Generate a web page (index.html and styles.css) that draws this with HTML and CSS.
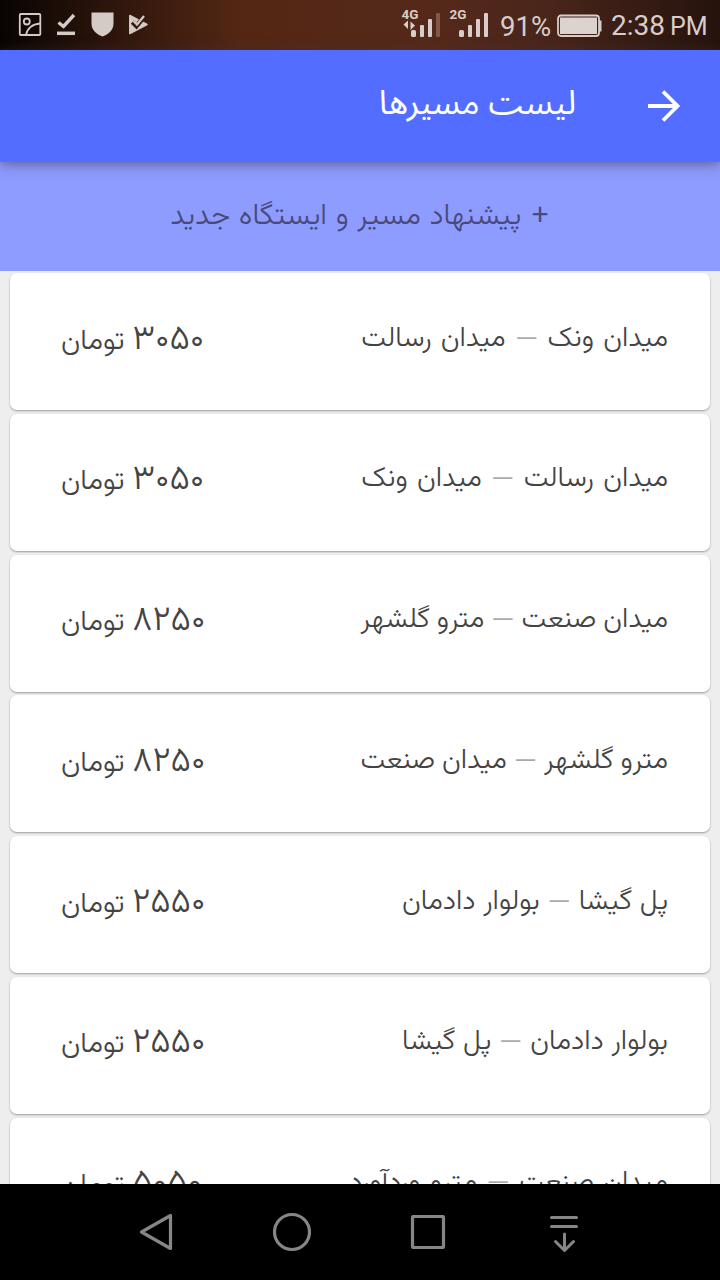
FILE: index.html
```html
<!DOCTYPE html>
<html lang="fa">
<head>
<meta charset="utf-8">
<title>لیست مسیرها</title>
<link rel="stylesheet" href="styles.css">
</head>
<body>
<div class="screen">
  <header class="status">
    <svg class="status-left" width="160" height="50" viewBox="0 0 160 50" fill="none" stroke="#d4cac6" stroke-width="1.800">
      <rect x="19.800" y="14" width="20.500" height="21" rx="1"/><circle cx="26.800" cy="21.500" r="3"/><path d="M26 35C27 29 32 24 40 23.500"/>
      <path d="M58.500 22.500l5 4 10.500-11.500" stroke-width="3.400"/><path d="M57 33.300h18" stroke-width="3.500"/>
      <path d="M91.500 12.500h22v11c0 6-4 10.500-11 13-7-2.500-11-7-11-13z" fill="#d4cac6" stroke="none"/>
      <path d="M129.800 15.500v18L147 24.500z" fill="#d4cac6" stroke-linejoin="round" stroke-width="1.500"/><path d="M132.500 22l4 4 9-11" stroke="#35190e" stroke-width="4.600"/><path d="M133.500 21l3.500 3.500 7-8.500" stroke-width="2.300"/>
    </svg>
    <div class="status-right">
      <svg width="98" height="50" viewBox="0 0 98 50" fill="#d8cdca">
        <text class="net" x="-.5" y="18.500">4G</text><text class="net" x="47.500" y="18.500">2G</text>
        <path d="M1.500 24.500l4.500-4v8.500zM13 25.500l-4.500-4v8.500z"/>
        <rect x="9" y="30" width="5" height="7" rx="1.500"/><rect x="18" y="25" width="4" height="12" rx="1"/><rect x="26" y="19" width="4" height="18" rx="1"/><rect x="34" y="13" width="4" height="24" rx="1" fill="#80594b"/>
        <rect x="57" y="30" width="5" height="7" rx="1.500"/><rect x="66" y="25" width="4" height="12" rx="1"/><rect x="74" y="19" width="4" height="18" rx="1"/><rect x="82" y="13" width="4" height="24" rx="1"/>
      </svg>
      <span class="pct">91%</span>
      <svg class="battery" width="46" height="24" viewBox="0 0 46 24"><rect x="1" y="1.500" width="41" height="20.500" rx="3" fill="none" stroke="#d8cdca" stroke-width="1.800"/><rect x="3" y="3.500" width="37" height="16.500" fill="#ddd3ce"/><path d="M42 6.500h2.500v11H42z" fill="#d8cdca"/></svg>
      <span class="clock">2:38 <small>PM</small></span>
    </div>
  </header>
  <div class="appbar" dir="rtl">
    <svg class="arrow" width="34" height="34" viewBox="0 0 34 34" fill="none" stroke="#fff" stroke-width="3.800"><path d="M1 17h30M16 2.500L30.500 17 16 31.500"/></svg>
    <h1>لیست مسیرها</h1>
  </div>
  <div class="suggest" dir="rtl"><span><b>+</b> پیشنهاد مسیر و ایستگاه جدید</span></div>
  <main class="list" dir="rtl">
    <div class="card"><span class="route wide">میدان ونک <i>—</i> میدان رسالت</span><span class="price"><b>۳۰۵۰</b> تومان</span></div>
    <div class="card"><span class="route wide">میدان رسالت <i>—</i> میدان ونک</span><span class="price"><b>۳۰۵۰</b> تومان</span></div>
    <div class="card"><span class="route tight">میدان صنعت <i>—</i> مترو گلشهر</span><span class="price"><b>۸۲۵۰</b> تومان</span></div>
    <div class="card"><span class="route tight">مترو گلشهر <i>—</i> میدان صنعت</span><span class="price"><b>۸۲۵۰</b> تومان</span></div>
    <div class="card"><span class="route">پل گیشا <i>—</i> بولوار دادمان</span><span class="price"><b>۲۵۵۰</b> تومان</span></div>
    <div class="card"><span class="route">بولوار دادمان <i>—</i> پل گیشا</span><span class="price"><b>۲۵۵۰</b> تومان</span></div>
    <div class="card"><span class="route wide">میدان صنعت <i>—</i> مترو وردآورد</span><span class="price"><b>۵۰۵۰</b> تومان</span></div>
  </main>
  <nav class="navbar">
    <svg width="720" height="96" viewBox="0 0 720 96" fill="none" stroke="#868686" stroke-width="3.200" stroke-linejoin="round" stroke-linecap="round">
      <path d="M141.500 48L170.500 31.500V64.500z"/><circle cx="292" cy="48" r="17.500"/><rect x="412.500" y="32.500" width="31" height="31" rx=".5"/>
      <path d="M551.500 33.500h25M551.500 42.500h25M564.500 50v16M555.500 57.500l9 9 9-9" stroke-width="3"/>
    </svg>
  </nav>
</div>
</body>
</html>
```
FILE: styles.css
```css
* { box-sizing: border-box; }
body { margin: 0; }
.screen {
  width: 720px; height: 1280px; overflow: hidden;
  display: flex; flex-direction: column;
  background: #eee;
  font-family: "Vazirmatn", "Vazir", "Noto Naskh Arabic", sans-serif;
}
.status {
  height: 50px; flex: none; display: flex; justify-content: space-between;
  background: linear-gradient(90deg, #080402 0, #2d150c 110px, #542714 240px, #55291a 440px, #49251a 550px, #25130d 720px);
  color: #d8cdca; font-family: Roboto, sans-serif;
}
.status-right { display: flex; align-items: center; padding-right: 11px; }
.status-right svg { overflow: visible; }
.net { font: 700 13.5px Roboto, sans-serif; }
.pct, .clock { font-size: 28px; line-height: 50px; padding-top: 3px; white-space: nowrap; }
.pct { width: 57px; font-size: 27.5px; }
.clock { margin-left: 8px; width: 98px; }
.clock small { font-size: 25px; margin-left: -2px; }
.battery { margin-top: 2px; }
.appbar {
  height: 112px; flex: none; position: relative; z-index: 1;
  display: flex; align-items: center; padding-right: 39px; gap: 71px;
  background: #526dff; box-shadow: 0 2px 12px rgba(60, 55, 70, .6);
  color: #fff;
}
.arrow { flex: none; }
h1 { margin: 0; padding-bottom: 6px; font: 400 34px "Noto Sans Arabic"; }
.suggest {
  height: 109px; flex: none; display: flex; align-items: center; justify-content: center;
  background: #8e9bff; color: #484a7c; font-size: 29.5px; font-weight: 300; white-space: nowrap;
  line-height: 40px; word-spacing: .8px;
}
.suggest b { font-weight: 300; font-size: 37px; line-height: 1; }
.list {
  flex: 1; min-height: 0; overflow: hidden;
  display: flex; flex-direction: column; gap: 3.8px; padding: 2px 10px 0;
}
.card {
  height: 137px; flex: none; display: flex; align-items: center; justify-content: space-between;
  padding: 0 42px 0 51px; background: #fff; border-radius: 7px;
  box-shadow: 0 1px 2px rgba(0, 0, 0, .35);
  color: #444; font-weight: 330; white-space: nowrap;
}
.route { font-size: 28px; padding-bottom: 6px; word-spacing: .2px; }
.route.wide { word-spacing: 1.7px; }
.route.tight { word-spacing: -.6px; }
.route i { font-style: normal; color: #aaa; font-size: 30px; line-height: 1; }
.price { font-size: 28.8px; line-height: 48px; }
.price b { font-size: 35px; font-weight: 330; line-height: 1; }
.navbar { height: 96px; flex: none; background: #000; }
.navbar svg { display: block; }
```
